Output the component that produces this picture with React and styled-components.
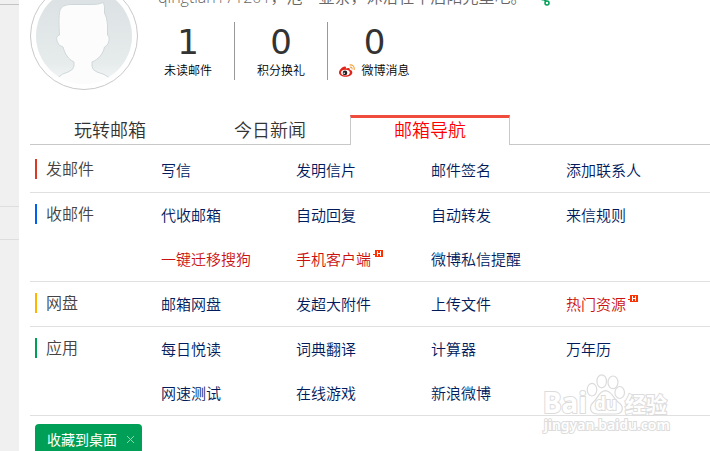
import React from "react";
import styled, { createGlobalStyle } from "styled-components";

const GlobalStyle = createGlobalStyle`
  * {
    box-sizing: border-box;
  }
  body {
    margin: 0;
    background-color: white;
    font-family: "Noto Sans CJK SC", sans-serif;
    font-weight: 350;
    overflow: hidden;
  }
`;

const Page = styled.div`
  display: flex;
  min-height: 100vh;
`;

const Sidebar = styled.aside`
  flex: none;
  width: 19px;
  background-color: #f0f0f0;
`;

const SideBlock = styled.div`
  height: ${(props) => props.$height}px;
  border-bottom: 1px solid ${(props) => props.$line || "#dedede"};
`;

const Main = styled.main`
  position: relative;
  flex: 1;
  min-width: 0;
  padding-left: 11px;
`;

/* the page is scrolled down a little, so the header starts above the window */
const Header = styled.header`
  display: flex;
  gap: 4px;
  margin-top: -18px;
`;

const Avatar = styled.svg`
  flex: none;
  width: 108px;
  height: 108px;
`;

const Greeting = styled.p`
  display: flex;
  align-items: center;
  gap: 14px;
  margin: 0;
  padding: 4px 0 0 16px;
  font-family: "Open Sans", "Noto Sans CJK SC", sans-serif;
  font-size: 16px;
  line-height: 22px;
  color: #666;
  white-space: nowrap;
`;

const Share = styled.button`
  display: flex;
  padding: 0;
  border: none;
  background: none;
  cursor: pointer;
`;

const Stats = styled.ul`
  display: flex;
  margin: 0;
  padding: 14px 0 0;
  list-style: none;
`;

const Stat = styled.li`
  display: flex;
  flex-direction: column;
  align-items: center;
  width: 93px;
  height: 58px;
  border-right: 1px solid #999;

  &:last-child {
    border-right: none;
  }
`;

const Count = styled.span`
  font-family: "DejaVu Sans", sans-serif;
  font-size: 34px;
  font-weight: normal;
  line-height: 40px;
  color: #333;
`;

const StatLabel = styled.a`
  display: flex;
  align-items: center;
  gap: 6px;
  font-size: 12px;
  line-height: 16px;
  color: black;
  text-decoration: none;
`;

const Tabs = styled.div`
  display: flex;
  margin-top: 25px;
  height: 30px;
  border-bottom: 1px solid #c8c8c8;
`;

const Tab = styled.button`
  width: 160px;
  height: 30px;
  padding: 0 0 6px;
  border: 1px solid transparent;
  border-width: 3px 1px 0;
  background: none;
  font-family: inherit;
  font-size: 18px;
  font-weight: inherit;
  line-height: 20px;
  color: #333;
  cursor: pointer;

  &[aria-selected="true"] {
    border-color: #f04c3e #c8c8c8;
    background-color: white;
    color: #f00;
  }
`;

const Groups = styled.div`
  padding-top: 3px;
`;

const Group = styled.section`
  display: flex;
  border-bottom: 1px solid #e0e0e0;
`;

const GroupTitle = styled.h2`
  flex: none;
  width: 126px;
  height: 20px;
  margin: 11px 0 0 5px;
  padding-left: 9px;
  border-left: 2px solid ${(props) => props.$color};
  font-size: 16px;
  font-weight: inherit;
  line-height: 18px;
  color: #444;
`;

const Links = styled.ul`
  flex: 1;
  display: grid;
  grid-template-columns: repeat(auto-fill, 135px);
  margin: 0;
  padding: 0;
  list-style: none;
`;

const LinkItem = styled.li`
  display: flex;
  gap: 2px;
  height: 44px;
`;

const Link = styled.a`
  font-size: 15px;
  line-height: 44px;
  color: ${(props) => (props.$hot ? "#c11" : "#001a5c")};
  text-decoration: none;
  white-space: nowrap;

  &:hover {
    text-decoration: underline;
  }
`;

const HotBadge = styled.svg`
  width: 10px;
  height: 7px;
  margin-top: 13px;
`;

const Desktop = styled.div`
  display: inline-flex;
  align-items: center;
  gap: 9px;
  height: 30px;
  margin: 8px 0 0 5px;
  padding: 0 7px 0 12px;
  border-radius: 4px;
  background-color: #009f57;
`;

const DesktopLink = styled.a`
  font-size: 14px;
  font-weight: normal;
  line-height: 28px;
  color: white;
  text-decoration: none;
`;

const Close = styled.button`
  display: flex;
  padding: 0;
  border: none;
  background: none;
  cursor: pointer;
`;

const Watermark = styled.svg`
  position: absolute;
  right: 36px;
  top: 370px;
  width: 134px;
  height: 68px;
  pointer-events: none;
`;

const groups = [
  {
    title: "发邮件",
    color: "#d93a26",
    links: [
      { text: "写信" },
      { text: "发明信片" },
      { text: "邮件签名" },
      { text: "添加联系人" },
    ],
  },
  {
    title: "收邮件",
    color: "#0060f0",
    links: [
      { text: "代收邮箱" },
      { text: "自动回复" },
      { text: "自动转发" },
      { text: "来信规则" },
      { text: "一键迁移搜狗", hot: true },
      { text: "手机客户端", hot: true, badge: true },
      { text: "微博私信提醒" },
    ],
  },
  {
    title: "网盘",
    color: "#ffb400",
    links: [
      { text: "邮箱网盘" },
      { text: "发超大附件" },
      { text: "上传文件" },
      { text: "热门资源", hot: true, badge: true },
    ],
  },
  {
    title: "应用",
    color: "#009f57",
    links: [
      { text: "每日悦读" },
      { text: "词典翻译" },
      { text: "计算器" },
      { text: "万年历" },
      { text: "网速测试" },
      { text: "在线游戏" },
      { text: "新浪微博" },
    ],
  },
];

const tabs = ["玩转邮箱", "今日新闻", "邮箱导航"];

const AvatarPicture = () => (
  <Avatar viewBox="0 0 108 108" role="img" aria-label="头像">
    <defs>
      <linearGradient id="disc" x1="0" y1="0" x2="0" y2="1">
        <stop offset="0.2" stopColor="#dde3e4" />
        <stop offset="0.75" stopColor="#e6ebec" />
        <stop offset="1" stopColor="#f8fafa" />
      </linearGradient>
      <clipPath id="discClip">
        <circle cx="54" cy="54" r="48" />
      </clipPath>
    </defs>
    <circle cx="54" cy="54" r="53.5" fill="white" stroke="#c9c9c9" />
    <g clipPath="url(#discClip)">
      <rect width="108" height="108" fill="url(#disc)" />
      <path
        d="M29.5 53 C29 44 28.5 34 30 28 Q32 23 40 22.5 H60 Q68 23 73.5 20.500 Q75 24 74.5 31 Q77 35 77.5 43 V53 Q80 54 79 59 Q78 64 74.5 65 C73 72 69 77 62 80 V84 Q62 88 67 90 Q75 92 79 95.500 L83 110 H24 L28 95.500 Q32 91.500 38 90 Q43.500 88 44 84 V80 C38 77 35 72 33 65 Q28 64 27 59 Q25.500 54 29.5 53 Z"
        fill="#fcfcfd"
        stroke="#cfd8d9"
        strokeWidth="1"
      />
      <rect y="97" width="108" height="11" fill="#fcfcfd" />
    </g>
  </Avatar>
);

const WeiboIcon = () => (
  <svg width="16" height="13" viewBox="0 0 16 13" aria-hidden="true">
    <path
      d="M0 8.6 C0 5.6 4.8 1.5 6.6 2.8 C7.2 3.2 7 4 6.8 4.5 C8.8 3.6 11.2 3.6 10.8 5.8 C12.5 6.3 13.5 7.2 13.3 8.7 C13 11.3 9.7 12.8 6.6 12.8 C3 12.8 0 11.3 0 8.6 Z"
      fill="#e1251b"
    />
    <ellipse cx="6.4" cy="8.6" rx="4.4" ry="2.9" fill="white" />
    <circle cx="6" cy="8.9" r="2.3" fill="#222" />
    <circle cx="5.2" cy="9.3" r="0.8" fill="white" />
    <path
      d="M10.5 1 C13.5 0.2 16 2.8 15 6 M10.9 3.2 C12.5 2.9 13.4 4 13 5.3"
      fill="none"
      stroke="#f6a03c"
      strokeWidth="1.1"
    />
  </svg>
);

const Hot = () => (
  <HotBadge viewBox="0 0 10 7" role="img" aria-label="H">
    <path d="M2 0 H10 V7 H2 V5 H0 V4 H2 Z" fill="#ff3000" />
    <path d="M4.5 1 V6 M7.5 1 V6 M4.5 3.5 H7.5" stroke="white" />
  </HotBadge>
);

const App = () => {
  return (
    <>
      <GlobalStyle />
      <Page>
        <Sidebar>
          <SideBlock $height={5} $line="#c4c4c4" />
          <SideBlock $height={202} />
          <SideBlock $height={33} />
        </Sidebar>
        <Main>
          <Header>
            <AvatarPicture />
            <div>
              <Greeting>
                qingtian171201，泡一壶茶，沐浴在午后阳光里吧。
                <Share aria-label="分享">
                  <svg width="10" height="18" viewBox="0 0 10 18">
                    <path
                      d="M6 3 L2 9.500 L6 15"
                      fill="none"
                      stroke="#009f57"
                      strokeWidth="2"
                    />
                    <circle cx="2" cy="10" r="2.5" fill="#009f57" />
                    <circle cx="6" cy="3" r="2" fill="white" stroke="#009f57" />
                    <circle
                      cx="6"
                      cy="15"
                      r="2"
                      fill="white"
                      stroke="#009f57"
                      strokeWidth="1.5"
                    />
                  </svg>
                </Share>
              </Greeting>
              <Stats>
                <Stat>
                  <Count>1</Count>
                  <StatLabel href="#unread">未读邮件</StatLabel>
                </Stat>
                <Stat>
                  <Count>0</Count>
                  <StatLabel href="#points">积分换礼</StatLabel>
                </Stat>
                <Stat>
                  <Count>0</Count>
                  <StatLabel href="#weibo">
                    <WeiboIcon />
                    微博消息
                  </StatLabel>
                </Stat>
              </Stats>
            </div>
          </Header>
          <Tabs role="tablist">
            {tabs.map((tab) => (
              <Tab key={tab} role="tab" aria-selected={tab === "邮箱导航"}>
                {tab}
              </Tab>
            ))}
          </Tabs>
          <Groups>
            {groups.map((group) => (
              <Group key={group.title}>
                <GroupTitle $color={group.color}>{group.title}</GroupTitle>
                <Links>
                  {group.links.map((link) => (
                    <LinkItem key={link.text}>
                      <Link href="#" $hot={link.hot}>
                        {link.text}
                      </Link>
                      {link.badge && <Hot />}
                    </LinkItem>
                  ))}
                </Links>
              </Group>
            ))}
          </Groups>
          <Desktop>
            <DesktopLink href="#desktop">收藏到桌面</DesktopLink>
            <Close aria-label="关闭">
              <svg width="9" height="9" viewBox="0 0 9 9">
                <path d="M1 1 L8 8 M8 1 L1 8" stroke="#8fd6b2" />
              </svg>
            </Close>
          </Desktop>
          <Watermark viewBox="0 0 134 68">
            <g fill="white" stroke="#dcdcdc" strokeWidth="1.2">
              <ellipse cx="52" cy="19.7" rx="4.8" ry="6.3" />
              <ellipse cx="61.7" cy="11.3" rx="4.8" ry="6.5" />
              <ellipse cx="73" cy="12.3" rx="5" ry="6.3" />
              <ellipse cx="79.7" cy="22.5" rx="4.8" ry="6" />
              <path d="M65.3 20.700 C72 21 73 28 78 32 C85 37 83 44 75 44 H58 C50 44 48 37 54 31.500 C58 28 59 21 65.3 20.700 Z" />
            </g>
            <g
              fill="white"
              stroke="#dcdcdc"
              strokeWidth="2"
              paintOrder="stroke"
              fontFamily="'Noto Sans', 'Noto Sans CJK SC', sans-serif"
              fontWeight="bold"
            >
              <text x="3" y="43" fontSize="28">
                Bai
              </text>
              <text x="55" y="40" fontSize="17">
                du
              </text>
              <text x="85" y="42" fontSize="21">
                经验
              </text>
              <text x="4" y="60" fontSize="14" fontWeight="600">
                jingyan.baidu.com
              </text>
            </g>
          </Watermark>
        </Main>
      </Page>
    </>
  );
};

export default App;
